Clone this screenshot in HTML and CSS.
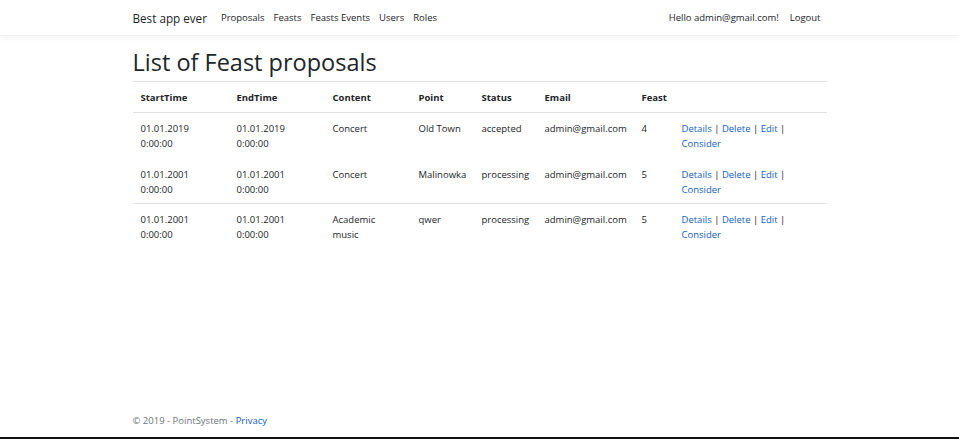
FILE: index.html
```html
<!DOCTYPE html>
<html lang="en">
<head>
<meta charset="utf-8">
<title>List of Feast proposals - Best app ever</title>
<link rel="stylesheet" href="styles.css">
</head>
<body>
<div class="page">
  <header class="navbar">
    <div class="container nav-inner">
      <a class="brand" href="#">Best app ever</a>
      <nav class="nav-links">
        <a href="#">Proposals</a>
        <a href="#">Feasts</a>
        <a href="#">Feasts Events</a>
        <a href="#">Users</a>
        <a href="#">Roles</a>
      </nav>
      <div class="nav-right">
        <span>Hello admin@gmail.com!</span>
        <a href="#">Logout</a>
      </div>
    </div>
  </header>

  <main class="container main">
    <h1>List of Feast proposals</h1>
    <table class="table">
      <thead>
        <tr>
          <th class="c1">StartTime</th>
          <th class="c2">EndTime</th>
          <th class="c3">Content</th>
          <th class="c4">Point</th>
          <th class="c5">Status</th>
          <th class="c6">Email</th>
          <th class="c7">Feast</th>
          <th></th>
        </tr>
      </thead>
      <tbody>
        <tr>
          <td>01.01.2019<br>0:00:00</td>
          <td>01.01.2019<br>0:00:00</td>
          <td>Concert</td>
          <td>Old Town</td>
          <td>accepted</td>
          <td>admin@gmail.com</td>
          <td>4</td>
          <td class="actions"><a href="#">Details</a> | <a href="#">Delete</a> | <a href="#">Edit</a> |<br><a href="#">Consider</a></td>
        </tr>
        <tr class="no-border">
          <td>01.01.2001<br>0:00:00</td>
          <td>01.01.2001<br>0:00:00</td>
          <td>Concert</td>
          <td>Malinowka</td>
          <td>processing</td>
          <td>admin@gmail.com</td>
          <td>5</td>
          <td class="actions"><a href="#">Details</a> | <a href="#">Delete</a> | <a href="#">Edit</a> |<br><a href="#">Consider</a></td>
        </tr>
        <tr>
          <td>01.01.2001<br>0:00:00</td>
          <td>01.01.2001<br>0:00:00</td>
          <td>Academic<br>music</td>
          <td>qwer</td>
          <td>processing</td>
          <td>admin@gmail.com</td>
          <td>5</td>
          <td class="actions"><a href="#">Details</a> | <a href="#">Delete</a> | <a href="#">Edit</a> |<br><a href="#">Consider</a></td>
        </tr>
      </tbody>
    </table>
  </main>

  <footer class="footer">
    <div class="container">&copy; 2019 - PointSystem - <a href="#">Privacy</a></div>
  </footer>
</div>
</body>
</html>
```

FILE: styles.css
```css
* { box-sizing: border-box; }
html, body { margin: 0; padding: 0; }
body {
  font-family: "Open Sans", "Noto Sans", sans-serif;
  font-size: 9.5px;
  line-height: 15px;
  color: #212529;
  background: #fff;
}
a { color: #1461c2; text-decoration: none; }

.page {
  min-height: 439px;
  height: 439px;
  display: flex;
  flex-direction: column;
  border-bottom: 2px solid #111;
}

.container {
  width: 694px;
  margin: 0 auto;
}

.navbar {
  height: 36px;
  background: #fff;
  border-bottom: 1px solid #f0f0f0;
  box-shadow: 0 2px 6px rgba(0,0,0,0.05);
}
.nav-inner {
  display: flex;
  align-items: center;
  height: 100%;
}
.brand {
  color: #212529;
  font-size: 11.7px;
  margin-right: 14px;
  padding-top: 1px;
}
.nav-links { display: flex; gap: 9px; }
.nav-links a, .nav-right a { color: #212529; }
.nav-right {
  margin-left: auto;
  display: flex;
  gap: 11px;
  margin-right: 6px;
}

.main { flex: 1; padding-top: 11px; }
h1 {
  font-size: 23.5px;
  font-weight: 400;
  line-height: 30px;
  margin: 0 0 4px 0;
}

.table {
  width: 100%;
  border-collapse: collapse;
  table-layout: fixed;
}
.table th, .table td {
  text-align: left;
  vertical-align: top;
  padding: 8px 8px 7px;
  border-top: 1px solid #dee2e6;
}
.table th {
  font-weight: 700;
  border-bottom: 1px solid #dee2e6;
}
.table tr.no-border td { border-top: none; padding-top: 9px; padding-bottom: 6px; }
.c1 { width: 96px; }
.c2 { width: 96px; }
.c3 { width: 86px; }
.c4 { width: 63px; }
.c5 { width: 63px; }
.c6 { width: 97px; }
.c7 { width: 40px; }
.actions a { color: #1461c2; }

.footer {
  color: #6c757d;
  padding-bottom: 9px;
}
```
